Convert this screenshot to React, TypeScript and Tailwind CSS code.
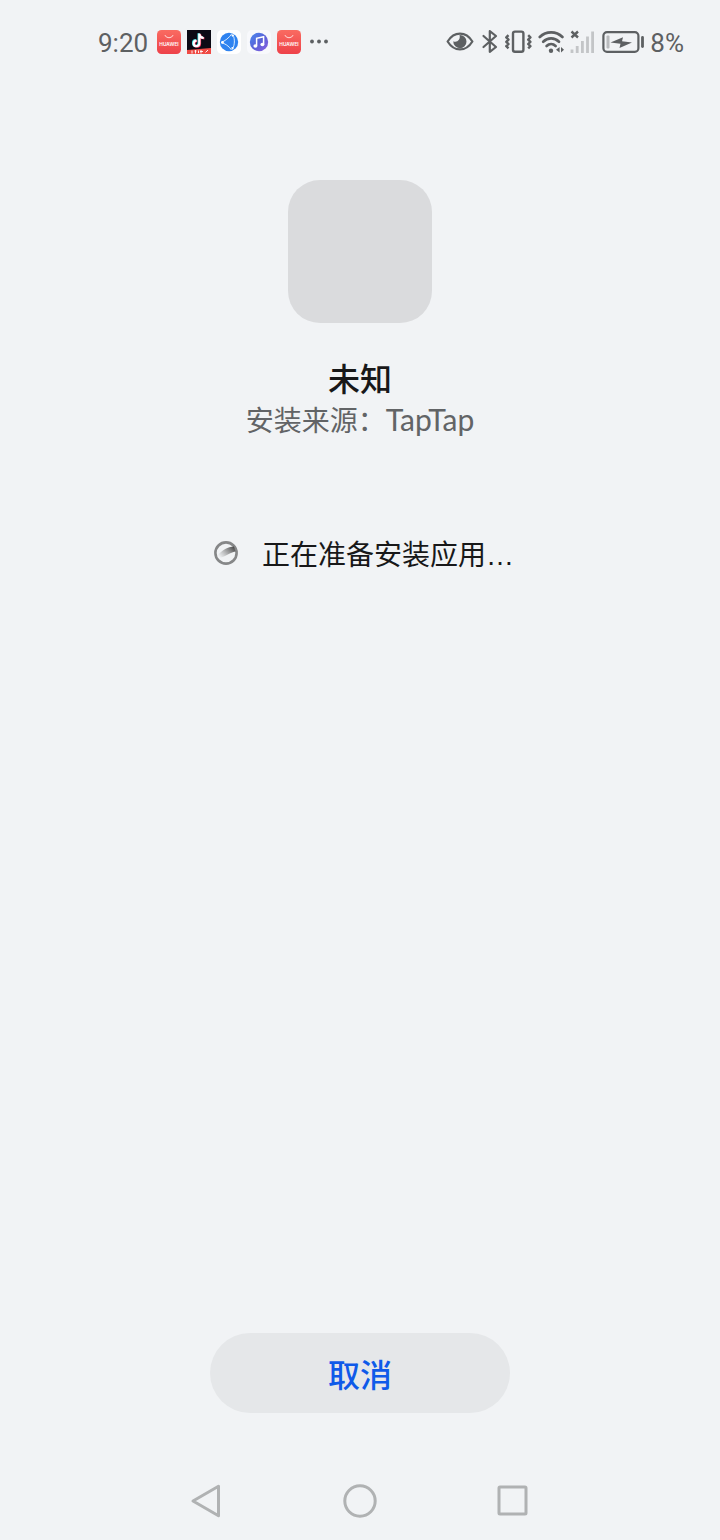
import { useId } from 'react';

const HuaweiIcon = () => {
  const fill = useId();

  return (
    <svg viewBox="0 0 24 24" className="w-6 h-6 flex-shrink-0" aria-label="Huawei AppGallery">
      <defs>
        <linearGradient id={fill} x1="0" y1="0" x2="0" y2="1">
          <stop offset="0" stopColor="#fa6b61" />
          <stop offset="1" stopColor="#ee4149" />
        </linearGradient>
      </defs>
      <rect width="24" height="24" rx="4.5" fill={`url(#${fill})`} />
      <path d="M8 5.4a4.2 3.4 0 0 0 8 0" fill="none" stroke="#fff" strokeOpacity="0.85" strokeWidth="0.9" strokeLinecap="round" />
      <text x="12" y="15.5" textAnchor="middle" fontSize="4.8" fontWeight="600" fill="#fff" fontFamily="Inter, sans-serif">
        HUAWEI
      </text>
    </svg>
  );
};

const TikTokIcon = () => (
  <svg viewBox="0 0 24 24" className="w-6 h-6 flex-shrink-0" aria-label="TikTok Lite">
    <rect width="24" height="24" fill="#0b0a14" />
    <g fill="none" strokeWidth="2.2">
      <path d="M11.6 3.2v9.8a2.8 2.8 0 1 1-2.8-2.8M11.6 3.6c.4 2.4 2.2 3.8 4.4 4" stroke="#35e3e6" />
      <path d="M13 4v9.8a2.8 2.8 0 1 1-2.8-2.8M13 4.4c.4 2.4 2.2 3.8 4.4 4" stroke="#f5355c" />
      <path d="M12.3 3.6v9.8a2.8 2.8 0 1 1-2.8-2.8M12.3 4c.4 2.4 2.2 3.8 4.4 4" stroke="#fff" />
    </g>
    <path d="M0 20l24-2v6H0z" fill="#ef4a44" />
    <path d="M5 20.5v3M7.5 21h2M8.5 20v3.5M11.5 20.5V23M14 20v3.5M13 21.5h3M18.5 22.5L21 20" stroke="#fff" strokeWidth="0.9" />
  </svg>
);

const BrowserIcon = () => (
  <svg viewBox="0 0 24 24" className="w-6 h-6 flex-shrink-0" aria-label="Browser">
    <rect width="24" height="24" rx="5" fill="#fff" />
    <circle cx="12" cy="12" r="9.2" fill="#2f83f0" />
    <path d="M4 12.5C8 11 12 8 15 3.5M4 12.5c4 1 8 3.5 10.5 7.5M16 4.5c2 5 1.8 10-.5 15" fill="none" stroke="#d9ecff" strokeWidth="1" />
    <circle cx="5.5" cy="12.4" r="1.3" fill="#fff" />
    <circle cx="15.6" cy="5.6" r="1.1" fill="#fff" />
    <circle cx="15.4" cy="18" r="1.1" fill="#fff" />
  </svg>
);

const MusicIcon = () => {
  const fill = useId();

  return (
    <svg viewBox="0 0 24 24" className="w-6 h-6 flex-shrink-0" aria-label="Music">
      <defs>
        <linearGradient id={fill} x1="0" y1="0" x2="1" y2="1">
          <stop offset="0" stopColor="#4a8cf0" />
          <stop offset="0.5" stopColor="#5a62d8" />
          <stop offset="1" stopColor="#8a5fe0" />
        </linearGradient>
      </defs>
      <rect width="24" height="24" rx="5" fill="#f8f9fc" />
      <circle cx="12" cy="12" r="9.2" fill={`url(#${fill})`} />
      <path d="M9.6 15.8V8.3l7-1.6v7.6" fill="none" stroke="#fff" strokeWidth="1.5" />
      <ellipse cx="8.4" cy="16" rx="2" ry="1.7" fill="#fff" />
      <ellipse cx="15.4" cy="14.5" rx="2" ry="1.7" fill="#fff" />
    </svg>
  );
};

const EyeIcon = () => (
  <svg viewBox="0 0 28 24" className="w-7 h-6 flex-shrink-0" aria-label="Eye comfort">
    <path d="M1.6 11.5C5 6 9.2 3.6 14 3.6s9 2.4 12.4 7.9c-3.4 5.5-7.6 7.9-12.4 7.9S5 17 1.6 11.5z" fill="none" stroke="#5d6062" strokeWidth="2.2" strokeLinejoin="round" />
    <path d="M13.5 5a6.600 6.600 0 1 1-6.200 6.200c3.600 2 7.600-1.800 6.200-6.200z" fill="#5d6062" />
  </svg>
);

const BluetoothIcon = () => (
  <svg viewBox="0 0 18 24" className="w-[18px] h-6 flex-shrink-0" aria-label="Bluetooth">
    <path d="M3.5 6L16 17l-6.200 4.800V1.200L16 6 3.500 17" fill="none" stroke="#5d6062" strokeWidth="2.2" strokeLinejoin="round" strokeLinecap="round" />
  </svg>
);

const VibrateIcon = () => (
  <svg viewBox="0 0 28 24" className="w-7 h-6 flex-shrink-0" aria-label="Vibrate">
    <g fill="none" stroke="#5d6062" strokeWidth="2.4" strokeLinejoin="round">
      <rect x="9" y="1.6" width="10.4" height="20.2" rx="2" />
      <path d="M4.5 5.2L2.300 7.400l2.200 2.200-2.200 2.200 2.200 2.200-2.200 2.200 2.200 2.200M24.200 5.200l2.200 2.200-2.200 2.200 2.200 2.200-2.200 2.200 2.200 2.200-2.200 2.200" />
    </g>
  </svg>
);

const WifiIcon = () => (
  <svg viewBox="0 0 26 24" className="w-[26px] h-6 flex-shrink-0" aria-label="Wi-Fi">
    <g fill="none" stroke="#5d6062" strokeWidth="2.7" strokeLinecap="round">
      <path d="M1.8 7C8 .8 18.200.8 24.400 7" />
      <path d="M5.2 11.700c4.600-4.400 11.200-4.400 15.800 0" />
      <path d="M8.6 16c2.600-2.500 6.400-2.500 9 0" />
    </g>
    <circle cx="13" cy="20.700" r="2.200" fill="#5d6062" />
    <path d="M21.600 17v5.600L18 19.800zM23 17v5.600l3-2.800z" fill="#5d6062" />
  </svg>
);

const SignalIcon = () => (
  <svg viewBox="0 0 24 24" className="w-6 h-6 flex-shrink-0" aria-label="No signal">
    <path d="M1.500 1.500l6.500 6M8 1.500l-6.500 6" stroke="#5d6062" strokeWidth="2.4" />
    <path d="M2 19.500V23M7.200 16v7M12.400 11v12M17.500 6.500V23M22.600 1.500V23" stroke="#c3c5c7" strokeWidth="2.8" />
  </svg>
);

const BatteryIcon = () => (
  <svg viewBox="0 0 44 24" className="w-11 h-6 flex-shrink-0" aria-label="Battery charging">
    <rect x="3.400" y="2.100" width="35" height="19.800" rx="3.600" fill="none" stroke="#5d6062" strokeWidth="2.200" />
    <rect x="6.500" y="5.500" width="3" height="13" rx="1" fill="#b9bbbd" />
    <path d="M10.500 12.600L23 7.200l-1 4 10 1.200L19.500 18l1-4.300z" fill="#5d6062" />
    <path d="M42.500 7.500v9" stroke="#5d6062" strokeWidth="2.800" strokeLinecap="round" />
  </svg>
);

const StatusBar = () => (
  <header className="h-[84px] pl-[98px] pr-9 flex items-center justify-between text-[#5d6062] text-[26px] leading-8 font-[Roboto,sans-serif]">
    <div className="flex items-center gap-1.5">
      <time className="w-[53px] pt-0.5">9:20</time>
      <HuaweiIcon />
      <TikTokIcon />
      <BrowserIcon />
      <MusicIcon />
      <HuaweiIcon />
      <svg viewBox="0 0 24 24" className="w-6 h-6 flex-shrink-0" fill="#5d6062" aria-label="More notifications">
        <circle cx="5" cy="11.5" r="1.9" />
        <circle cx="12" cy="11.5" r="1.9" />
        <circle cx="19" cy="11.5" r="1.9" />
      </svg>
    </div>
    <div className="flex items-center gap-1.5">
      <EyeIcon />
      <BluetoothIcon />
      <VibrateIcon />
      <WifiIcon />
      <SignalIcon />
      <BatteryIcon />
      <span className="pt-0.5">8%</span>
    </div>
  </header>
);

const Spinner = () => {
  const fade = useId();

  return (
    <svg viewBox="0 0 24 24" className="w-6 h-6 flex-shrink-0" aria-hidden="true">
      <defs>
        <linearGradient id={fade} x1="0" y1="0.8" x2="1" y2="0.2">
          <stop offset="0" stopColor="#777" stopOpacity="0" />
          <stop offset="1" stopColor="#4c4c4c" />
        </linearGradient>
      </defs>
      <circle cx="12" cy="12" r="10.6" fill="none" stroke="#868788" strokeWidth="2.6" />
      <path d="M4 14C8 9 14 6 20 5.5l1.5 5C16 11.5 12 15.5 5.5 17z" fill={`url(#${fade})`} />
    </svg>
  );
};

const NavigationBar = () => (
  <nav className="h-[79px] px-[130px] flex items-center text-[#b0b2b3]">
    <button type="button" aria-label="返回" className="flex-1 flex justify-center">
      <svg viewBox="0 0 36 36" className="w-9 h-9" fill="none" stroke="currentColor" strokeWidth="3" strokeLinejoin="round">
        <path d="M29.5 3.3v29.4L4 18z" />
      </svg>
    </button>
    <button type="button" aria-label="主屏幕" className="flex-1 flex justify-center">
      <svg viewBox="0 0 36 36" className="w-9 h-9" fill="none" stroke="currentColor" strokeWidth="3">
        <circle cx="18" cy="18" r="15.2" />
      </svg>
    </button>
    <button type="button" aria-label="最近任务" className="flex-1 flex justify-center">
      <svg viewBox="0 0 36 36" className="w-9 h-9" fill="none" stroke="currentColor" strokeWidth="3" strokeLinejoin="round">
        <rect x="4" y="4" width="27" height="27" rx="1" />
      </svg>
    </button>
  </nav>
);

export default function App() {
  return (
    <div className="min-h-screen flex flex-col bg-[#f1f3f5] font-['Noto_Sans_CJK_SC',sans-serif]">
      <StatusBar />

      <main className="flex-1 pt-24 pb-12 flex flex-col items-center">
        {/* Icono de la app */}
        <div className="w-36 h-[143px] rounded-[32px] bg-[#dadbdd]" />

        <h1 className="mt-[34px] mb-0.5 text-[32px] leading-10 font-medium text-[#181819]">未知</h1>
        <p className="text-[28px] leading-10 text-[#626466]">
          安装来源：<span className="text-[30px] leading-none font-[Lato,sans-serif]">TapTap</span>
        </p>

        {/* Progreso */}
        <div role="status" className="mt-24 pl-2 flex items-center gap-6">
          <Spinner />
          <p className="pt-0.5 text-[28px] leading-8 text-[#181819]">
            正在准备安装应用<span className="leading-none font-['Liberation_Sans',sans-serif]">…</span>
          </p>
        </div>

        <button
          type="button"
          className="mt-auto w-[300px] h-20 rounded-full bg-[#e5e7e9] text-[32px] leading-10 font-medium text-[#0f5ae9]"
        >
          取消
        </button>
      </main>

      <NavigationBar />
    </div>
  );
}
